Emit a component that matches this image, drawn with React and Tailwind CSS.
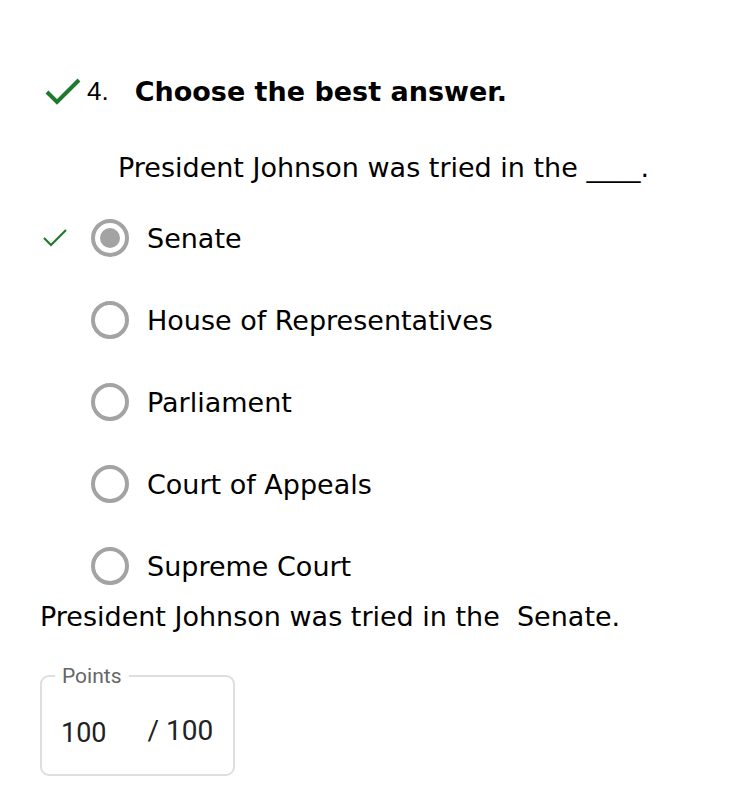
import React from "react";

const Check = ({ className }) => (
  <svg viewBox="0 0 36 28" className={className} fill="none">
    <path d="M2 15 L12 25 L34 3" stroke="#1f7a2e" strokeWidth="4" strokeLinecap="butt" strokeLinejoin="miter" />
  </svg>
);

const SmallCheck = ({ className }) => (
  <svg viewBox="0 0 24 18" className={className} fill="none">
    <path d="M1 9 L8 16 L23 1" stroke="#1f7a2e" strokeWidth="2.2" />
  </svg>
);

const Radio = ({ checked }) => (
  <div className="w-[38px] h-[38px] rounded-full border-[4px] border-[#a3a3a3] flex items-center justify-center shrink-0 bg-white">
    {checked && <div className="w-[20px] h-[20px] rounded-full bg-[#a3a3a3]" />}
  </div>
);

const options = ["Senate", "House of Representatives", "Parliament", "Court of Appeals", "Supreme Court"];

export default function App() {
  return (
    <div className="w-[746px] h-[800px] bg-white text-black" style={{ fontFamily: '"DejaVu Sans", Verdana, sans-serif' }}>
      <div className="pt-[77px] pl-[45px] flex items-center h-[105px]">
        <Check className="w-[36px] h-[28px]" />
        <span className="ml-[6px] text-[26px] leading-none" style={{ fontFamily: '"Liberation Sans", Arial, sans-serif' }}>4.</span>
        <span className="ml-[26px] text-[27px] font-bold leading-none">Choose the best answer.</span>
      </div>
      <div className="pl-[118px] mt-[49px] text-[27px] leading-none">President Johnson was tried in the ____.</div>
      <div className="mt-[38px] flex flex-col gap-[44px]">
        {options.map((o, i) => (
          <div key={o} className="flex items-center h-[38px]">
            <div className="w-[91px] pl-[43px] flex items-center">
              {i === 0 && <SmallCheck className="w-[24px] h-[18px]" />}
            </div>
            <Radio checked={i === 0} />
            <span className="ml-[18px] text-[27px] leading-none">{o}</span>
          </div>
        ))}
      </div>
      <div className="pl-[40px] mt-[18px] text-[27px] leading-none">President Johnson was tried in the&nbsp; Senate.</div>
      <div className="ml-[40px] mt-[45px] w-[195px] h-[101px] relative border-2 border-[#dedede] rounded-[9px]" style={{ fontFamily: 'Roboto, sans-serif' }}>
        <span className="absolute left-[13px] -top-[11px] px-[7px] bg-white text-[21px] leading-none text-[#666]">Points</span>
        <div className="flex items-center h-full pl-[19px] pt-[10px] text-[27px] text-[#222]">
          <span className="mt-[6px]">100</span>
          <span className="ml-[41px] text-[28px]">/ 100</span>
        </div>
      </div>
    </div>
  );
}
